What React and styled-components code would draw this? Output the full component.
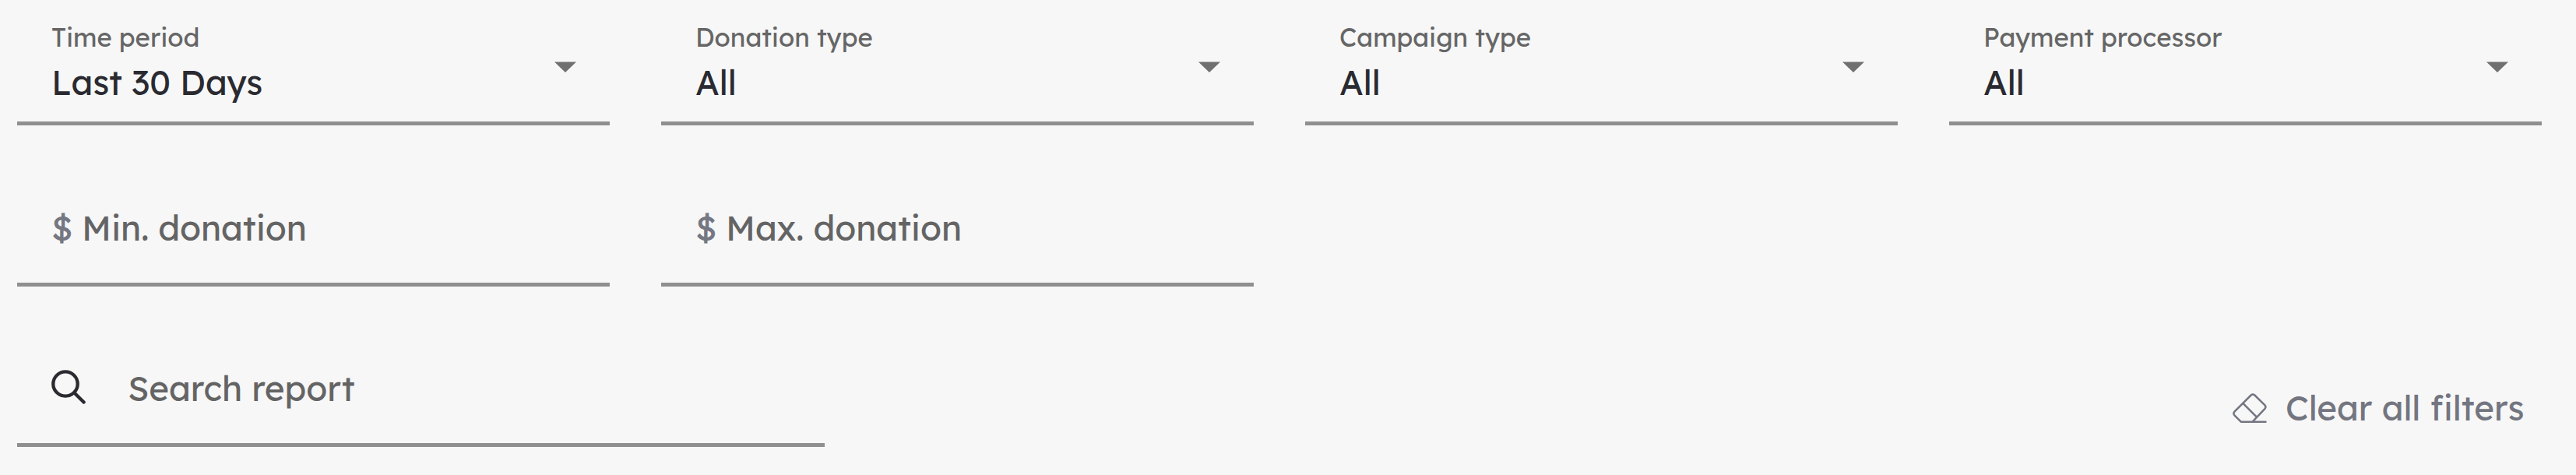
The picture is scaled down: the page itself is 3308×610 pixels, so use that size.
import React from "react";
import styled, { createGlobalStyle } from "styled-components";

const GlobalStyle = createGlobalStyle`
  *, *::before, *::after { box-sizing: border-box; }
  body {
    margin: 0;
    background: #f7f7f7;
    font-family: "Lexend Deca", Lexend, Inter, "Liberation Sans", sans-serif;
  }
`;

const Filters = styled.main`
  display: flex;
  flex-direction: column;
  height: 610px;
  padding: 0 44px 0 22px;
  background: #f7f7f7;
`;

const FieldRow = styled.div`
  display: grid;
  grid-template-columns: repeat(4, 761px);
  column-gap: 66px;
  margin-bottom: ${({ $gap }) => $gap}px;
`;

const FooterRow = styled.div`
  display: flex;
  justify-content: space-between;
  align-items: flex-start;
`;

const Field = styled.div`
  display: flex;
  align-items: flex-start;
  width: ${({ $width }) => $width || 761}px;
  height: 161px;
  padding: 0 43px 0 44px;
  border-bottom: 5px solid #8f8f8f;
`;

const SelectText = styled.div`
  display: flex;
  flex: 1;
  flex-direction: column;
  gap: 10px;
  padding-top: 27px;
`;

const Label = styled.span`
  color: #666;
  font-size: 33px;
  line-height: 41px;
  letter-spacing: -0.06px;
  white-space: nowrap;
`;

const Value = styled.span`
  color: #2a2a31;
  font-size: 44px;
  line-height: 55px;
  letter-spacing: -0.1px;
  white-space: nowrap;
`;

const Arrow = styled.svg`
  width: 28px;
  height: 14px;
  margin-top: 79px;
  fill: #707070;
`;

const Currency = styled.span`
  width: 39px;
  padding-top: 58px;
  color: #757782;
  font-size: 44px;
  line-height: 55px;
`;

const Placeholder = styled.span`
  padding-top: 58px;
  color: #646464;
  font-size: 44px;
  line-height: 55px;
  letter-spacing: -0.1px;
  white-space: nowrap;
`;

const SearchIcon = styled.svg`
  width: 44px;
  height: 44px;
  margin: 62px 54px 0 0;
  fill: none;
  stroke: #2a2a31;
  stroke-width: 4.3;
  stroke-linecap: round;
`;

const ClearButton = styled.button`
  display: flex;
  align-items: flex-start;
  margin: 83px 22.5px 0 0;
  padding: 0;
  border: 0;
  background: none;
  color: #737580;
  font-family: inherit;
  font-size: 44px;
  line-height: 55px;
  letter-spacing: -0.1px;
  white-space: nowrap;
`;

const EraserIcon = styled.svg`
  width: 44px;
  height: 38px;
  margin: 9px 24px 0 0;
  fill: none;
  stroke: currentColor;
  stroke-width: 2.5;
  stroke-linecap: round;
  stroke-linejoin: round;
`;

const selects = [
  { label: "Time period", value: "Last 30 Days" },
  { label: "Donation type", value: "All" },
  { label: "Campaign type", value: "All" },
  { label: "Payment processor", value: "All" },
];

const amounts = ["Min. donation", "Max. donation"];

function SelectField({ label, value }) {
  return (
    <Field>
      <SelectText>
        <Label>{label}</Label>
        <Value>{value}</Value>
      </SelectText>
      <Arrow viewBox="0 0 28 14" aria-hidden="true">
        <path d="M0 .4H28L14 14Z" />
      </Arrow>
    </Field>
  );
}

export default function App() {
  return (
    <>
      <GlobalStyle />
      <Filters>
        <FieldRow $gap={46}>
          {selects.map((s) => (
            <SelectField key={s.label} {...s} />
          ))}
        </FieldRow>
        <FieldRow $gap={45}>
          {amounts.map((text) => (
            <Field key={text}>
              <Currency>$</Currency>
              <Placeholder>{text}</Placeholder>
            </Field>
          ))}
        </FieldRow>
        <FooterRow>
          <Field $width={1037}>
            <SearchIcon viewBox="0 0 44 44" aria-hidden="true">
              <circle cx="18" cy="18" r="15.7" />
              <path d="M29.5 29.5L41.6 41.6" />
            </SearchIcon>
            <Placeholder>Search report</Placeholder>
          </Field>
          <ClearButton type="button">
            <EraserIcon viewBox="0 0 44 38" aria-hidden="true">
              <path d="M42.5 36.7H10.8L2.4 28.3Q0.4 26 2.4 23.7L23.6 2.5Q26 .4 28.4 2.5L41.5 15.3Q43.3 17.4 41.5 19.8L25.8 36.3M13.8 13.3L30.5 30.2" />
            </EraserIcon>
            Clear all filters
          </ClearButton>
        </FooterRow>
      </Filters>
    </>
  );
}
